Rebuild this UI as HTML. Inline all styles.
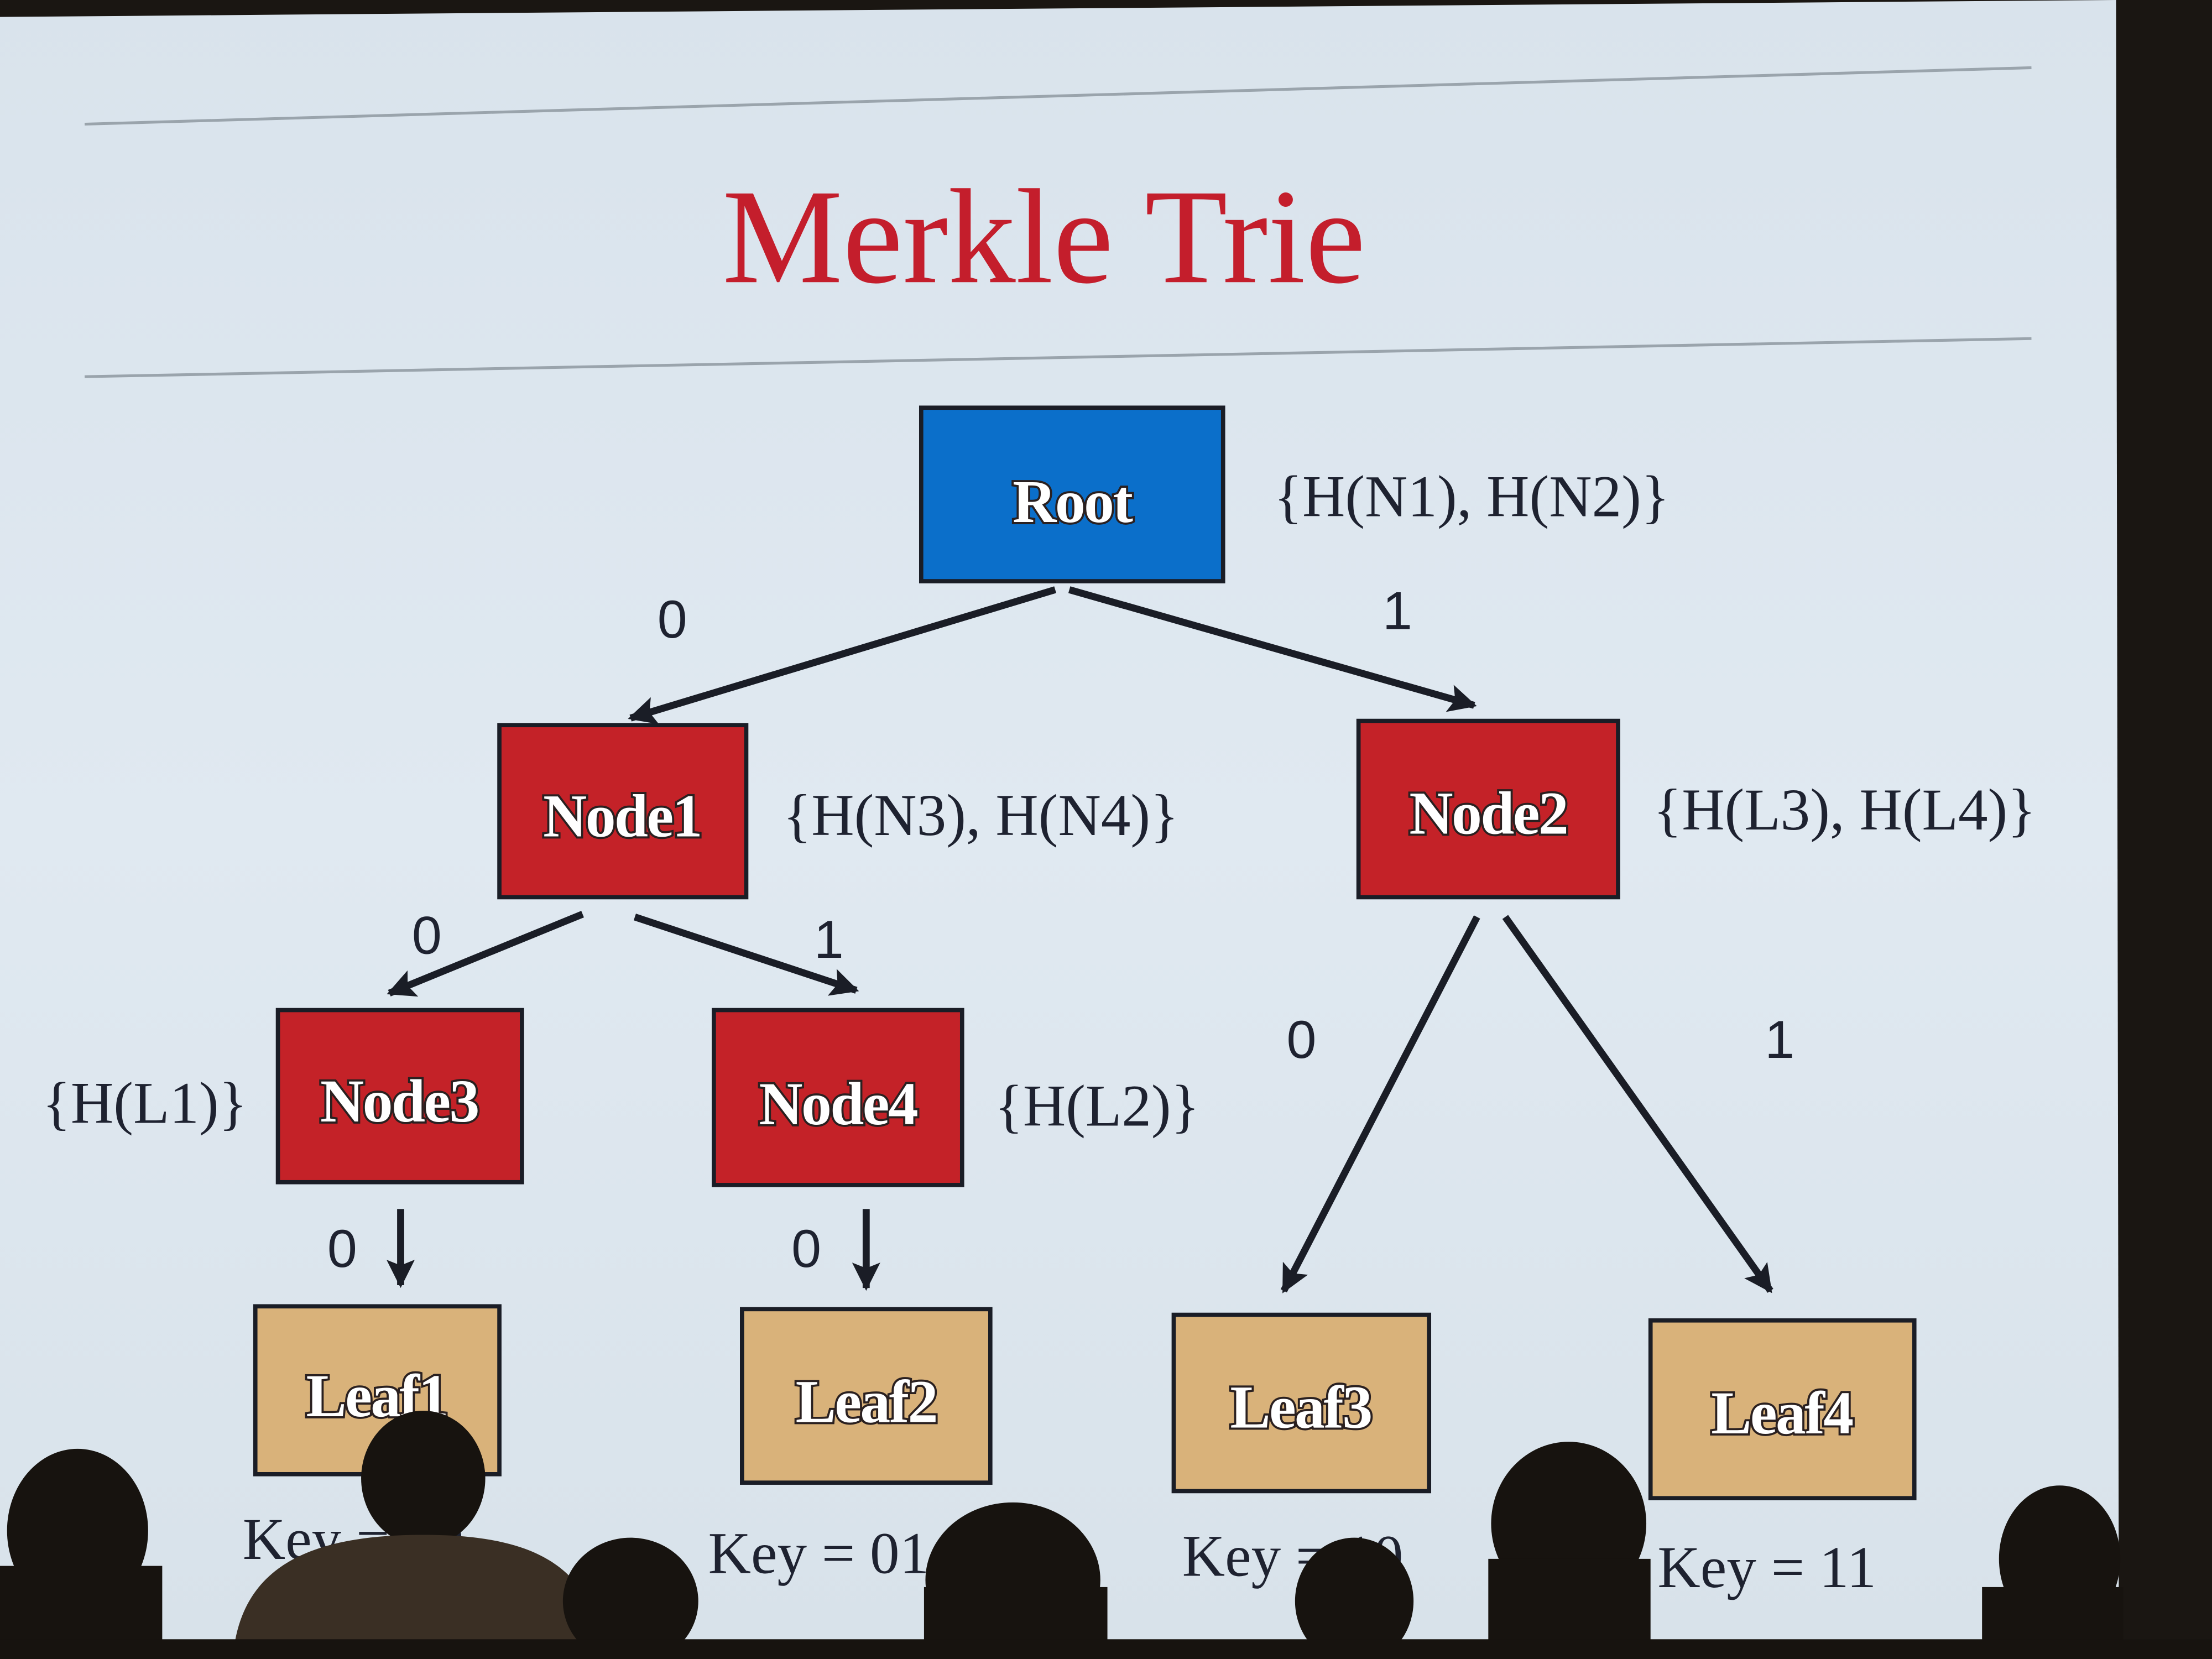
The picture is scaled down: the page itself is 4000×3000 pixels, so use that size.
<!DOCTYPE html>
<html><head><meta charset="utf-8"><style>
html,body{margin:0;padding:0;background:#1a1612;overflow:hidden}
svg{display:block}
</style></head><body>
<svg width="4000" height="3000" viewBox="0 0 1568 1176" preserveAspectRatio="none" xmlns="http://www.w3.org/2000/svg">
<defs>
<linearGradient id="bg" x1="0" y1="0" x2="0" y2="1">
<stop offset="0" stop-color="#d9e3ec"/><stop offset="0.5" stop-color="#e0e9f1"/><stop offset="1" stop-color="#d8e2ea"/>
</linearGradient>
<marker id="ah2" viewBox="0 0 10 10" markerWidth="24" markerHeight="20" refX="9" refY="5" orient="auto" markerUnits="userSpaceOnUse">
<path d="M0,0 L10,5 L0,10 L2,5 Z" fill="#1a1d26"/></marker>
</defs>
<rect x="0" y="0" width="1568" height="1176" fill="#1a1612"/>
<polygon points="0,12 1500,0 1502,1176 0,1176" fill="url(#bg)"/>
<line x1="60" y1="88" x2="1440" y2="48" stroke="#9aa4ac" stroke-width="2"/>
<line x1="60" y1="267" x2="1440" y2="240" stroke="#9aa4ac" stroke-width="2"/>
<text x="740" y="200" font-family="Liberation Serif,serif" font-size="96" fill="#c41e2c" text-anchor="middle">Merkle Trie</text>

<g font-family="Liberation Serif,serif" fill="#1e2230" font-size="42">
<text x="903" y="366">{H(N1), H(N2)}</text>
<text x="555" y="592">{H(N3), H(N4)}</text>
<text x="1172" y="588">{H(L3), H(L4)}</text>
<text x="30" y="796">{H(L1)}</text>
<text x="705" y="798">{H(L2)}</text>
<g font-family="Liberation Sans,sans-serif" font-size="38">
<text x="466" y="452">0</text><text x="980" y="446">1</text>
<text x="292" y="676">0</text><text x="577" y="679">1</text>
<text x="232" y="898">0</text><text x="561" y="898">0</text>
<text x="912" y="750">0</text><text x="1251" y="750">1</text>
</g>
<text x="172" y="1105">Key = 00</text>
<text x="502" y="1115">Key = 01</text>
<text x="838" y="1117">Key = 10</text>
<text x="1175" y="1125">Key = 11</text>
</g>

<g stroke="#1a1d26" stroke-width="5" fill="none" marker-end="url(#ah2)">
<line x1="748" y1="418" x2="447" y2="509"/>
<line x1="758" y1="418" x2="1045" y2="500"/>
<line x1="413" y1="648" x2="276" y2="704"/>
<line x1="450" y1="650" x2="607" y2="702"/>
<line x1="284" y1="857" x2="284" y2="911"/>
<line x1="614" y1="857" x2="614" y2="913"/>
<line x1="1047" y1="650" x2="910" y2="915"/>
<line x1="1067" y1="650" x2="1255" y2="915"/>
</g>

<g stroke="#1a1d26" stroke-width="3">
<rect x="653" y="289" width="214" height="123" fill="#0b6fca"/>
<rect x="354" y="514" width="175" height="122" fill="#c42228"/>
<rect x="963" y="511" width="184" height="125" fill="#c42228"/>
<rect x="197" y="716" width="173" height="122" fill="#c42228"/>
<rect x="506" y="716" width="176" height="124" fill="#c42228"/>
<rect x="181" y="926" width="173" height="119" fill="#d9b27a"/>
<rect x="526" y="928" width="176" height="123" fill="#d9b27a"/>
<rect x="832" y="932" width="181" height="125" fill="#d9b27a"/>
<rect x="1170" y="936" width="187" height="126" fill="#d9b27a"/>
</g>
<g font-family="Liberation Serif,serif" font-weight="bold" fill="#fff" font-size="43" text-anchor="middle" stroke="#2a2020" stroke-width="3" paint-order="stroke" letter-spacing="-1">
<text x="760" y="370">Root</text>
<text x="441" y="593">Node1</text>
<text x="1055" y="591">Node2</text>
<text x="283" y="795">Node3</text>
<text x="594" y="797">Node4</text>
<text x="267" y="1004">Leaf1</text>
<text x="614" y="1008">Leaf2</text>
<text x="922" y="1012">Leaf3</text>
<text x="1263" y="1016">Leaf4</text>
</g>

<g fill="#17130f">
<ellipse cx="55" cy="1085" rx="50" ry="58"/><rect x="0" y="1110" width="115" height="66"/>
<ellipse cx="300" cy="1048" rx="44" ry="48"/><path d="M165,1176 C170,1110 220,1088 300,1088 C380,1088 420,1110 430,1176Z" fill="#3a2f24"/>
<ellipse cx="447" cy="1135" rx="48" ry="45"/>
<ellipse cx="718" cy="1120" rx="62" ry="55"/><rect x="655" y="1125" width="130" height="51"/>
<ellipse cx="960" cy="1135" rx="42" ry="45"/>
<ellipse cx="1112" cy="1080" rx="55" ry="58"/><rect x="1055" y="1105" width="115" height="71"/>
<ellipse cx="1460" cy="1105" rx="43" ry="52"/><rect x="1405" y="1125" width="100" height="51"/>
<rect x="0" y="1162" width="1568" height="14"/>
</g>
</svg>
</body></html>
